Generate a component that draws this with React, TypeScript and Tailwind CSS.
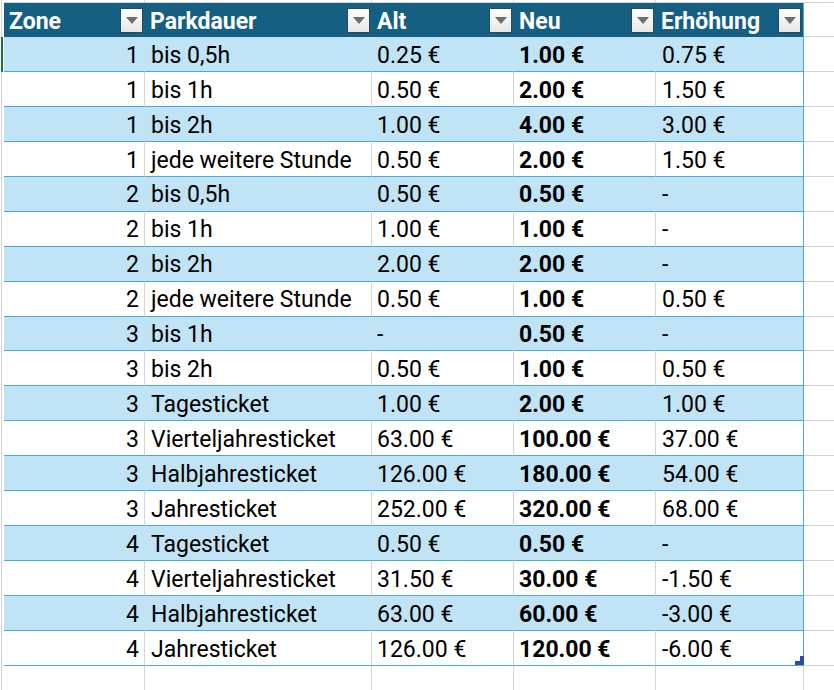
import React from "react";

type Row = [string, string, string, string, string];

const rows: Row[] = [
  ["1", "bis 0,5h", "0.25 €", "1.00 €", "0.75 €"],
  ["1", "bis 1h", "0.50 €", "2.00 €", "1.50 €"],
  ["1", "bis 2h", "1.00 €", "4.00 €", "3.00 €"],
  ["1", "jede weitere Stunde", "0.50 €", "2.00 €", "1.50 €"],
  ["2", "bis 0,5h", "0.50 €", "0.50 €", "-"],
  ["2", "bis 1h", "1.00 €", "1.00 €", "-"],
  ["2", "bis 2h", "2.00 €", "2.00 €", "-"],
  ["2", "jede weitere Stunde", "0.50 €", "1.00 €", "0.50 €"],
  ["3", "bis 1h", "-", "0.50 €", "-"],
  ["3", "bis 2h", "0.50 €", "1.00 €", "0.50 €"],
  ["3", "Tagesticket", "1.00 €", "2.00 €", "1.00 €"],
  ["3", "Vierteljahresticket", "63.00 €", "100.00 €", "37.00 €"],
  ["3", "Halbjahresticket", "126.00 €", "180.00 €", "54.00 €"],
  ["3", "Jahresticket", "252.00 €", "320.00 €", "68.00 €"],
  ["4", "Tagesticket", "0.50 €", "0.50 €", "-"],
  ["4", "Vierteljahresticket", "31.50 €", "30.00 €", "-1.50 €"],
  ["4", "Halbjahresticket", "63.00 €", "60.00 €", "-3.00 €"],
  ["4", "Jahresticket", "126.00 €", "120.00 €", "-6.00 €"],
];

const headers = ["Zone", "Parkdauer", "Alt", "Neu", "Erhöhung"];

function FilterButton() {
  return (
    <div className="w-[23px] h-[25px] mr-[2px] shrink-0 border border-[#2a4a5c] bg-gradient-to-b from-[#ffffff] to-[#e6e6e6] flex items-center justify-center">
      <svg width="12" height="7" viewBox="0 0 12 7">
        <polygon points="0,0 12,0 6,7" fill="#6f6f6f" />
      </svg>
    </div>
  );
}

function Gutter({ green }: { green?: boolean }) {
  return (
    <div className="flex h-full">
      <div className="w-[1px]" />
      {green ? (
        <div className="w-[2px] bg-[#1e7145]" />
      ) : (
        <div className="w-[1px] bg-[#d4d4d4]" />
      )}
    </div>
  );
}

export default function App() {
  const font = { fontFamily: "Roboto, 'Liberation Sans', sans-serif" };
  return (
    <div
      className="relative w-[834px] h-[690px] bg-white overflow-hidden grid grid-cols-[4px_141px_227px_142px_142px_148px_1fr] grid-rows-[3px_34px_repeat(18,34.94px)_1fr] text-[23px] text-black"
      style={font}
    >
      {/* top strip */}
      <Gutter />
      {[0, 1, 2, 3, 4].map((i) => (
        <div key={"t" + i} className={`border-b border-[#d4d4d4] ${i < 4 ? "border-r" : ""}`} />
      ))}
      <div className="border-b border-[#d4d4d4]" />

      {/* header */}
      <Gutter />
      {headers.map((h, i) => (
        <div
          key={h}
          className={`bg-[#156082] flex items-center justify-between pl-[5px] text-white font-bold ${i === 4 ? "border-r border-[#4aa8da]" : ""}`}
        >
          <span className="leading-none pt-[2px]">{h}</span>
          <FilterButton />
        </div>
      ))}
      <div className="border-b border-[#d4d4d4]" />

      {/* body */}
      {rows.map((r, ri) => {
        const blue = ri % 2 === 0;
        const bg = blue ? "bg-[#c0e4f5]" : "bg-white";
        const sep = blue ? "border-r border-[#c0e4f5]" : "border-r border-[#d4d4d4]";
        return (
          <React.Fragment key={ri}>
            <Gutter green={ri === 0} />
            <div className={`${bg} ${sep} border-b border-b-[#4aa8da] flex items-center justify-end pr-[5px] pt-[4px]`}>
              {r[0]}
            </div>
            <div className={`${bg} ${sep} border-b border-b-[#4aa8da] flex items-center pl-[6px] pt-[4px] whitespace-nowrap`}>
              {r[1]}
            </div>
            <div className={`${bg} ${sep} border-b border-b-[#4aa8da] flex items-center pl-[5px] pt-[4px] whitespace-nowrap`}>
              {r[2]}
            </div>
            <div className={`${bg} ${sep} border-b border-b-[#4aa8da] flex items-center pl-[5px] pt-[4px] font-bold whitespace-nowrap`}>
              {r[3]}
            </div>
            <div className={`${bg} border-r border-[#4aa8da] border-b border-b-[#4aa8da] flex items-center pl-[6px] pt-[4px] whitespace-nowrap`}>
              {r[4]}
            </div>
            <div className="border-b border-[#d4d4d4]" />
          </React.Fragment>
        );
      })}

      {/* bottom filler */}
      <Gutter />
      {[0, 1, 2, 3, 4].map((i) => (
        <div key={"b" + i} className="border-r border-[#d4d4d4]" />
      ))}
      <div />

      {/* resize handle */}
      <div className="absolute left-[795px] top-[656px] w-[9px] h-[9px]">
        <div className="absolute right-0 top-0 w-[4px] h-[5px] bg-[#3447b0]" />
        <div className="absolute left-0 bottom-0 w-[9px] h-[4px] bg-[#3447b0]" />
      </div>
    </div>
  );
}
